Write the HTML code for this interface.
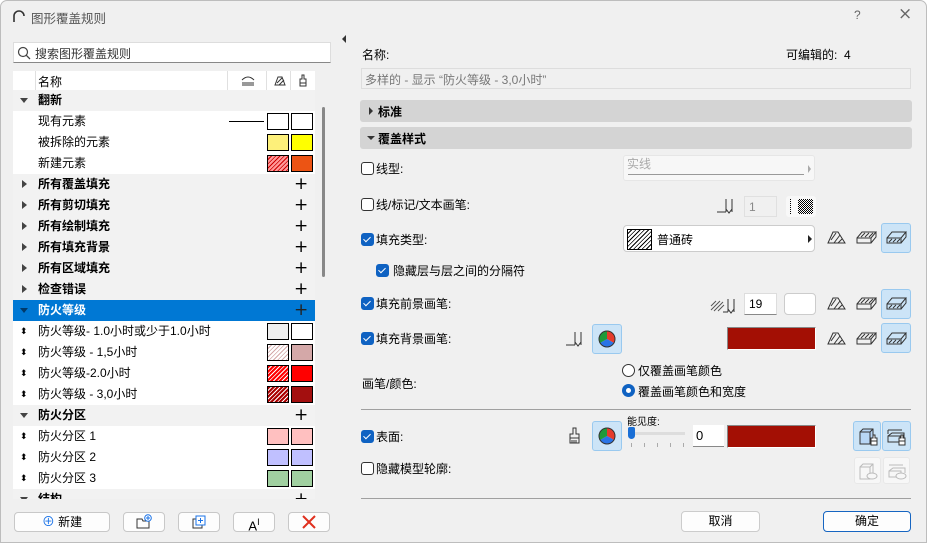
<!DOCTYPE html>
<html><head><meta charset="utf-8">
<style>
*{box-sizing:border-box;margin:0;padding:0}
body{width:927px;height:543px;overflow:hidden;background:#fff;font-family:"Liberation Sans","Noto Sans CJK SC",sans-serif;font-size:12px;color:#000}
#win{position:absolute;left:0;top:0;width:927px;height:543px;background:#f0f0f0;border:1px solid #bdbdbd;border-radius:7px 7px 0 0}
.a{position:absolute;white-space:nowrap}
.row{position:absolute;left:12px;width:302px;height:21px;line-height:21px}
.grp{background:#f2f2f2;font-weight:bold}
.it{background:#fff}
.tri{position:absolute;left:7px;top:8px;width:0;height:0;border-left:4px solid transparent;border-right:4px solid transparent;border-top:5px solid #444}
.trr{position:absolute;left:9px;top:6px;width:0;height:0;border-top:4px solid transparent;border-bottom:4px solid transparent;border-left:5px solid #444}
.lbl{position:absolute;left:25px;top:0}
.plus{position:absolute;left:281px;top:0;font-size:17px;font-weight:normal;font-family:"DejaVu Sans",sans-serif}
.sw{position:absolute;top:2px;width:22px;height:17px;border:1px solid #000}
.s1{left:254px}.s2{left:278px}
.ud{position:absolute;left:7px;top:0;font-size:9px;line-height:21px}
.btn{position:absolute;height:20px;background:#fdfdfd;border:1px solid #c8c8c8;border-radius:4px;text-align:center;line-height:18px}
.cb{position:absolute;width:13px;height:13px;border:1px solid #333;border-radius:3px;background:#fff}
.cb.on{background:#0f62c2;border-color:#0f62c2}
.cb.on:after{content:"";position:absolute;left:3px;top:1px;width:3px;height:6px;border:solid #fff;border-width:0 1.3px 1.3px 0;transform:rotate(45deg)}
.ib{position:absolute;width:30px;height:30px;border-radius:3px}
.sel{background:#cce4f7;border:1px solid #99c9ef}
.hatch{background:repeating-linear-gradient(135deg,#fff 0 2px,#000 2px 3px)}
</style></head><body>
<div id="win">
<!-- title -->
<svg class="a" style="left:11px;top:9px" width="13" height="13" viewBox="0 0 13 13"><path d="M2 12 V6 A5 5 0 0 1 12 6" fill="none" stroke="#333" stroke-width="1.6"/></svg>
<div class="a" style="left:30px;top:7px;font-size:12.5px;color:#555">图形覆盖规则</div>
<div class="a" style="left:853px;top:7px;color:#666;font-size:12px">?</div>
<div class="a" style="left:897px;top:3px;color:#666;font-size:17px;font-family:'DejaVu Sans'">×</div>

<!-- search -->
<div class="a" style="left:12px;top:41px;width:318px;height:21px;background:#fff;border:1px solid #ddd;border-bottom:1px solid #888"></div>
<svg class="a" style="left:16px;top:45px" width="14" height="14"><circle cx="6" cy="6" r="4.5" fill="none" stroke="#444" stroke-width="1.2"/><path d="M9.3 9.3 L13 13" stroke="#444" stroke-width="1.3"/></svg>
<div class="a" style="left:34px;top:44px;color:#333">搜索图形覆盖规则</div>

<!-- header -->
<div class="a" style="left:12px;top:70px;width:302px;height:19px;background:#fff"></div>
<div class="a" style="left:34px;top:70px;width:1px;height:19px;background:#e0e0e0"></div>
<div class="a" style="left:226px;top:70px;width:1px;height:19px;background:#e0e0e0"></div>
<div class="a" style="left:265px;top:70px;width:1px;height:19px;background:#e0e0e0"></div>
<div class="a" style="left:289px;top:70px;width:1px;height:19px;background:#e0e0e0"></div>
<div class="a" style="left:37px;top:72px">名称</div>
<svg class="a" style="left:240px;top:74px" width="14" height="11"><path d="M1 5 Q7 -1 13 5 M1 8H13 M1 10H13" fill="none" stroke="#333" stroke-width="1"/></svg>
<svg class="a" style="left:273px;top:74px" width="12" height="11"><path d="M1 10 L4 2 H8 L11 10 Z M3 8 L8 3 M5 10 L10 5" fill="none" stroke="#333" stroke-width="1"/></svg>
<svg class="a" style="left:297px;top:73px" width="10" height="13"><path d="M4 1 H6 V5 H8 V9 H2 V5 H4 Z M2 9 V12 H8 V9" fill="none" stroke="#333" stroke-width="1"/></svg>

<!-- list -->
<div style="position:absolute;left:0;top:0;width:320px;height:498px;overflow:hidden">
<div class="row grp" style="top:89px"><div class="tri"></div><span class="lbl">翻新</span></div>
<div class="row it" style="top:110px"><span class="lbl">现有元素</span><div class="a" style="left:216px;top:10px;width:35px;height:1px;background:#000"></div><div class="sw s1" style="background:#fff"></div><div class="sw s2" style="background:#fff"></div></div>
<div class="row it" style="top:131px"><span class="lbl">被拆除的元素</span><div class="sw s1" style="background:#fdf07a"></div><div class="sw s2" style="background:#ffff00"></div></div>
<div class="row it" style="top:152px"><span class="lbl">新建元素</span><div class="sw s1" style="background:repeating-linear-gradient(135deg,#f99 0 2px,#c00 2px 3px)"></div><div class="sw s2" style="background:#ec5414"></div></div>
<div class="row grp" style="top:173px"><div class="trr"></div><span class="lbl">所有覆盖填充</span><span class="plus">+</span></div>
<div class="row grp" style="top:194px"><div class="trr"></div><span class="lbl">所有剪切填充</span><span class="plus">+</span></div>
<div class="row grp" style="top:215px"><div class="trr"></div><span class="lbl">所有绘制填充</span><span class="plus">+</span></div>
<div class="row grp" style="top:236px"><div class="trr"></div><span class="lbl">所有填充背景</span><span class="plus">+</span></div>
<div class="row grp" style="top:257px"><div class="trr"></div><span class="lbl">所有区域填充</span><span class="plus">+</span></div>
<div class="row grp" style="top:278px"><div class="trr"></div><span class="lbl">检查错误</span><span class="plus">+</span></div>
<div class="row grp" style="top:299px;background:#0078d4;color:#fff"><div class="tri" style="border-top-color:#003a6a"></div><span class="lbl">防火等级</span><span class="plus" style="color:#222">+</span></div>
<div class="row it" style="top:320px"><span class="ud">⬍</span><span class="lbl">防火等级- 1.0小时或少于1.0小时</span><div class="sw s1" style="background:#efefef"></div><div class="sw s2" style="background:#fff"></div></div>
<div class="row it" style="top:341px"><span class="ud">⬍</span><span class="lbl">防火等级 - 1,5小时</span><div class="sw s1" style="background:repeating-linear-gradient(135deg,#fff 0 2px,#d4a8a8 2px 3px)"></div><div class="sw s2" style="background:#d4a8a8"></div></div>
<div class="row it" style="top:362px"><span class="ud">⬍</span><span class="lbl">防火等级-2.0小时</span><div class="sw s1" style="background:repeating-linear-gradient(135deg,#f00 0 2px,#fff 2px 3px)"></div><div class="sw s2" style="background:#ff0000"></div></div>
<div class="row it" style="top:383px"><span class="ud">⬍</span><span class="lbl">防火等级 - 3,0小时</span><div class="sw s1" style="background:repeating-linear-gradient(135deg,#a00 0 2px,#fff 2px 3px)"></div><div class="sw s2" style="background:#a30f0f"></div></div>
<div class="row grp" style="top:404px"><div class="tri"></div><span class="lbl">防火分区</span><span class="plus">+</span></div>
<div class="row it" style="top:425px"><span class="ud">⬍</span><span class="lbl">防火分区 1</span><div class="sw s1" style="background:#ffc0c0"></div><div class="sw s2" style="background:#ffc0c0"></div></div>
<div class="row it" style="top:446px"><span class="ud">⬍</span><span class="lbl">防火分区 2</span><div class="sw s1" style="background:#c0c0ff"></div><div class="sw s2" style="background:#c0c0ff"></div></div>
<div class="row it" style="top:467px"><span class="ud">⬍</span><span class="lbl">防火分区 3</span><div class="sw s1" style="background:#a0d0a0"></div><div class="sw s2" style="background:#a0d0a0"></div></div>
<div class="row grp" style="top:488px"><div class="tri"></div><span class="lbl">结构</span><span class="plus">+</span></div>
</div>
<div class="a" style="left:321px;top:106px;width:3px;height:170px;background:#888;border-radius:2px"></div>

<!-- left buttons -->
<div class="btn" style="left:13px;top:511px;width:96px"><span style="color:#1a73e8;font-size:13px">⊕</span> 新建</div>
<div class="btn" style="left:122px;top:511px;width:42px"><svg width="18" height="16" style="margin-top:1px"><path d="M2 5 H7 L8 7 H14 V14 H2 Z" fill="none" stroke="#333"/><circle cx="13" cy="4" r="3.3" fill="#fff" stroke="#1a73e8"/><path d="M13 2V6M11 4H15" stroke="#1a73e8"/></svg></div>
<div class="btn" style="left:177px;top:511px;width:42px"><svg width="16" height="16" style="margin-top:1px"><rect x="2" y="5" width="9" height="9" fill="none" stroke="#333"/><rect x="5" y="2" width="9" height="9" fill="#fff" stroke="#1a73e8"/><path d="M9.5 4V9M7 6.5H12" stroke="#1a73e8"/></svg></div>
<div class="btn" style="left:232px;top:511px;width:42px;font-size:13px">A<sup style="font-size:9px">I</sup></div>
<div class="btn" style="left:287px;top:511px;width:42px"><svg width="14" height="14" style="margin-top:2px"><path d="M1 1L13 13M13 1L1 13" stroke="#e0301e" stroke-width="2"/></svg></div>

<!-- splitter -->
<div class="a" style="left:341px;top:34px;width:0;height:0;border-top:4px solid transparent;border-bottom:4px solid transparent;border-right:4px solid #333"></div>

<!-- right -->
<div class="a" style="left:361px;top:45px">名称:</div>
<div class="a" style="left:785px;top:45px">可编辑的:&nbsp;&nbsp;4</div>
<div class="a" style="left:360px;top:67px;width:550px;height:21px;border:1px solid #ddd;background:#f0f0f0;color:#777;padding:2px 0 0 3px">多样的 - 显示 “防火等级 - 3,0小时”</div>
<div class="a" style="left:359px;top:99px;width:552px;height:22px;background:#d4d4d4;border-radius:3px"></div>
<div class="a" style="left:368px;top:106px;border-top:4px solid transparent;border-bottom:4px solid transparent;border-left:4px solid #333"></div>
<div class="a" style="left:377px;top:102px;font-weight:bold">标准</div>
<div class="a" style="left:359px;top:126px;width:552px;height:22px;background:#d4d4d4;border-radius:3px"></div>
<div class="a" style="left:366px;top:135px;border-left:4px solid transparent;border-right:4px solid transparent;border-top:4px solid #333"></div>
<div class="a" style="left:377px;top:129px;font-weight:bold">覆盖样式</div>

<div class="cb" style="left:360px;top:161px"></div><div class="a" style="left:375px;top:159px">线型:</div>
<div class="a" style="left:622px;top:154px;width:192px;height:26px;background:#f7f7f7;border:1px solid #e6e6e6;border-radius:3px"></div>
<div class="a" style="left:626px;top:154px;color:#aaa">实线</div>
<div class="a" style="left:627px;top:173px;width:176px;height:1px;background:#999"></div>
<div class="a" style="left:807px;top:164px;border-top:4px solid transparent;border-bottom:4px solid transparent;border-left:3px solid #aaa"></div>

<div class="cb" style="left:360px;top:197px"></div><div class="a" style="left:375px;top:195px">线/标记/文本画笔:</div>
<svg class="a" style="left:716px;top:195px" width="20" height="18"><path d="M0 16H9 M9 16 V3 M15 16 V3 M9 13 L12 17 L15 13" fill="none" stroke="#333"/></svg>
<div class="a" style="left:743px;top:195px;width:33px;height:21px;border:1px solid #e0e0e0;background:#f0f0f0;color:#888;padding:3px 0 0 4px">1</div>
<div class="a" style="left:785px;top:195px;width:30px;height:21px;background:#f8f8f8;border-radius:3px"></div>
<div class="a" style="left:789px;top:198px;width:1px;height:15px;border-left:1px dotted #000"></div>
<div class="a" style="left:797px;top:198px;width:15px;height:15px;background:repeating-conic-gradient(#000 0 25%,#fff 0 50%) 0 0/2px 2px"></div>

<div class="cb on" style="left:360px;top:232px"></div><div class="a" style="left:375px;top:230px">填充类型:</div>
<div class="a" style="left:622px;top:224px;width:192px;height:27px;background:#fff;border:1px solid #ccc;border-radius:4px"></div>
<div class="a hatch" style="left:626px;top:228px;width:25px;height:21px;border:1px solid #000"></div>
<div class="a" style="left:656px;top:230px">普通砖</div>
<div class="a" style="left:807px;top:234px;border-top:4px solid transparent;border-bottom:4px solid transparent;border-left:4px solid #222"></div>

<div class="cb on" style="left:375px;top:263px"></div><div class="a" style="left:392px;top:261px">隐藏层与层之间的分隔符</div>

<div class="cb on" style="left:360px;top:296px"></div><div class="a" style="left:375px;top:294px">填充前景画笔:</div>
<svg class="a" style="left:709px;top:295px" width="30" height="18"><path d="M1 10L6 5M1 14L10 5M4 15L13 6M8 15L14 9" stroke="#555"/><path d="M13 16H18 M18 16V3 M24 16V3 M18 13L21 17L24 13" fill="none" stroke="#333"/></svg>
<div class="a" style="left:743px;top:292px;width:33px;height:22px;border:1px solid #ddd;border-bottom:1px solid #888;background:#fff;padding:3px 0 0 4px">19</div>
<div class="a" style="left:783px;top:292px;width:32px;height:22px;border:1px solid #ccc;background:#fff;border-radius:4px"></div>

<div class="cb on" style="left:360px;top:331px"></div><div class="a" style="left:375px;top:329px">填充背景画笔:</div>
<svg class="a" style="left:565px;top:328px" width="20" height="18"><path d="M0 16H9 M9 16 V3 M15 16 V3 M9 13 L12 17 L15 13" fill="none" stroke="#333"/></svg>
<div class="ib sel" style="left:591px;top:323px"></div>
<div class="ib sel" style="left:591px;top:420px"></div>
<div class="a" style="left:726px;top:326px;width:89px;height:23px;background:#a30f04;border:1px solid #888;border-bottom-color:#fff;border-right-color:#fff"></div>

<!-- pie icons -->
<svg class="a" style="left:597px;top:329px" width="18" height="18" viewBox="0 0 18 18"><path d="M9 9V1A8 8 0 0 1 16 13Z" fill="#e53b2c"/><path d="M9 9L16 13A8 8 0 0 1 2 13Z" fill="#2a74e6"/><path d="M9 9L2 13A8 8 0 0 1 9 1Z" fill="#1e9a3a"/><circle cx="9" cy="9" r="8" fill="none" stroke="#333"/></svg>
<svg class="a" style="left:597px;top:426px" width="18" height="18" viewBox="0 0 18 18"><path d="M9 9V1A8 8 0 0 1 16 13Z" fill="#e53b2c"/><path d="M9 9L16 13A8 8 0 0 1 2 13Z" fill="#2a74e6"/><path d="M9 9L2 13A8 8 0 0 1 9 1Z" fill="#1e9a3a"/><circle cx="9" cy="9" r="8" fill="none" stroke="#333"/></svg>

<!-- right icon triples -->
<div class="ib sel" style="left:880px;top:222px"></div>
<div class="ib sel" style="left:880px;top:288px"></div>
<div class="ib sel" style="left:880px;top:322px"></div>
<svg class="a" style="left:826px;top:229px" width="20" height="14"><path d="M1 13L6 2H11L18 13Z M4 10L9 3M7 13L13 5M11 13L15 9" fill="none" stroke="#333"/></svg>
<svg class="a" style="left:855px;top:229px" width="22" height="14"><path d="M1 8H15V13H1Z M1 8L6 2H20L15 8 M15 13L20 7V2 M5 7L9 3M9 7L13 3M13 7L17 3" fill="none" stroke="#333"/></svg>
<svg class="a" style="left:885px;top:229px" width="22" height="14"><path d="M1 8H15V13H1Z M1 8L6 2H20L15 8 M15 13L20 7V2 M3 12L6 9M7 12L10 9M11 12L14 9" fill="none" stroke="#333"/></svg>
<svg class="a" style="left:826px;top:295px" width="20" height="14"><path d="M1 13L6 2H11L18 13Z M4 10L9 3M7 13L13 5M11 13L15 9" fill="none" stroke="#333"/></svg>
<svg class="a" style="left:855px;top:295px" width="22" height="14"><path d="M1 8H15V13H1Z M1 8L6 2H20L15 8 M15 13L20 7V2 M5 7L9 3M9 7L13 3M13 7L17 3" fill="none" stroke="#333"/></svg>
<svg class="a" style="left:885px;top:295px" width="22" height="14"><path d="M1 8H15V13H1Z M1 8L6 2H20L15 8 M15 13L20 7V2 M3 12L6 9M7 12L10 9M11 12L14 9" fill="none" stroke="#333"/></svg>
<svg class="a" style="left:826px;top:330px" width="20" height="14"><path d="M1 13L6 2H11L18 13Z M4 10L9 3M7 13L13 5M11 13L15 9" fill="none" stroke="#333"/></svg>
<svg class="a" style="left:855px;top:330px" width="22" height="14"><path d="M1 8H15V13H1Z M1 8L6 2H20L15 8 M15 13L20 7V2 M5 7L9 3M9 7L13 3M13 7L17 3" fill="none" stroke="#333"/></svg>
<svg class="a" style="left:885px;top:330px" width="22" height="14"><path d="M1 8H15V13H1Z M1 8L6 2H20L15 8 M15 13L20 7V2 M3 12L6 9M7 12L10 9M11 12L14 9" fill="none" stroke="#333"/></svg>

<!-- pen/color -->
<div class="a" style="left:361px;top:374px">画笔/颜色:</div>
<div class="a" style="left:621px;top:363px;width:13px;height:13px;border:1px solid #333;border-radius:50%;background:#fff"></div>
<div class="a" style="left:637px;top:361px">仅覆盖画笔颜色</div>
<div class="a" style="left:621px;top:383px;width:13px;height:13px;border-radius:50%;background:#0f62c2"></div>
<div class="a" style="left:625px;top:387px;width:5px;height:5px;border-radius:50%;background:#fff"></div>
<div class="a" style="left:637px;top:382px">覆盖画笔颜色和宽度</div>
<div class="a" style="left:360px;top:408px;width:550px;height:1px;background:#a0a0a0"></div>

<!-- surface -->
<div class="cb on" style="left:360px;top:429px"></div><div class="a" style="left:375px;top:427px">表面:</div>
<svg class="a" style="left:567px;top:426px" width="14" height="18"><path d="M5 1H8V7H11V11H2V7H5Z M2 11V16H11V11 M4 16V13M6 16V13M8 16V13" fill="none" stroke="#333"/></svg>
<div class="a" style="left:626px;top:412px;font-size:10px">能见度:</div>
<div class="a" style="left:628px;top:431px;width:56px;height:3px;background:#ddd"></div>
<div class="a" style="left:627px;top:426px;width:7px;height:12px;background:#1a6fd6;border-radius:2px 2px 4px 4px"></div>
<div class="a" style="left:630px;top:442px;width:55px;height:4px;background:repeating-linear-gradient(90deg,#aaa 0 1px,transparent 1px 13px)"></div>
<div class="a" style="left:692px;top:424px;width:31px;height:22px;background:#fff;border-bottom:1px solid #888;padding:3px 0 0 3px;font-size:13px">0</div>
<div class="a" style="left:726px;top:424px;width:89px;height:23px;background:#a30f04;border:1px solid #888;border-bottom-color:#fff;border-right-color:#fff"></div>
<div class="ib sel" style="left:852px;top:420px;width:28px"></div>
<div class="ib sel" style="left:881px;top:420px;width:29px"></div>
<svg class="a" style="left:857px;top:425px" width="20" height="20"><path d="M2 6H12V18H2Z M2 6L5 3H15V14L12 17 M12 6L15 3" fill="#b8d6f5" stroke="#333"/><path d="M15 9H17V12H19V15H13V12H15Z M13 15V19H19V15" fill="#fff" stroke="#333"/></svg>
<svg class="a" style="left:885px;top:425px" width="22" height="20"><path d="M2 4H16M2 4V8 M2 10H14V16H2Z M2 10L6 7H18V12" fill="none" stroke="#333" stroke-dasharray="0"/><path d="M15 9H17V12H19V15H13V12H15Z M13 15V19H19V15" fill="#fff" stroke="#333"/></svg>

<div class="cb" style="left:360px;top:461px"></div><div class="a" style="left:375px;top:459px">隐藏模型轮廓:</div>
<div class="a" style="left:853px;top:456px;width:27px;height:27px;border-radius:3px;background:#f7f7f7;border:1px solid #e8e8e8"></div>
<div class="a" style="left:882px;top:456px;width:27px;height:27px;border-radius:3px;background:#f7f7f7;border:1px solid #e8e8e8"></div>
<svg class="a" style="left:857px;top:460px" width="20" height="20"><path d="M2 6H12V18H2Z M2 6L5 3H15V14L12 17 M12 6L15 3" fill="none" stroke="#bbb"/><ellipse cx="14" cy="15" rx="5" ry="3" fill="#f7f7f7" stroke="#bbb"/></svg>
<svg class="a" style="left:886px;top:460px" width="20" height="20"><path d="M2 4H16M2 10H14V16H2Z M2 10L6 7H18V12" fill="none" stroke="#bbb"/><ellipse cx="14" cy="15" rx="5" ry="3" fill="#f7f7f7" stroke="#bbb"/></svg>

<div class="a" style="left:360px;top:497px;width:550px;height:1px;background:#a0a0a0"></div>
<div class="btn" style="left:680px;top:510px;width:79px;height:21px;border-color:#ccc">取消</div>
<div class="btn" style="left:822px;top:510px;width:88px;height:21px;border-color:#1665c1">确定</div>
</div>
</body></html>
